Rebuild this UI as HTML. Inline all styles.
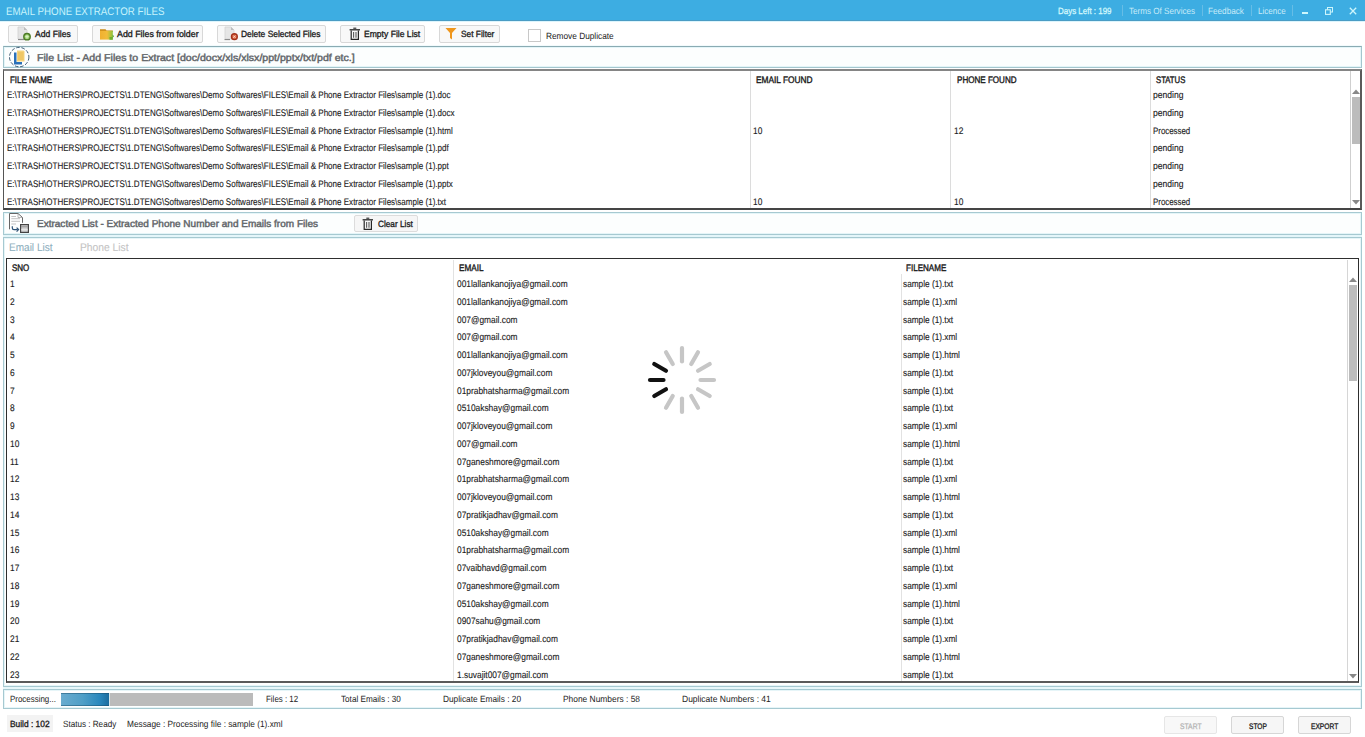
<!DOCTYPE html>
<html><head><meta charset="utf-8"><title>Email Phone Extractor Files</title>
<style>
html,body{margin:0;padding:0;width:1365px;height:737px;overflow:hidden;background:#ffffff;font-family:"Liberation Sans", sans-serif;}
.t{position:absolute;white-space:pre;line-height:1;transform-origin:0 0;text-rendering:geometricPrecision;}
</style></head><body>
<div style="position:absolute;left:0px;top:0px;width:1365px;height:20px;background:#3dade2"></div>
<div style="position:absolute;left:0px;top:20px;width:1365px;height:1px;background:#4a9cc4"></div>
<div style="position:absolute;left:0px;top:21px;width:1365px;height:1px;background:#dcf5fd"></div>
<div class="t" style="left:5.70px;top:7.00px;font-size:11px;color:#c8f4fc;transform:scaleX(0.8850);">EMAIL PHONE EXTRACTOR FILES</div>
<div class="t" style="left:1058.40px;top:7.00px;font-size:9px;color:#d4f8fd;-webkit-text-stroke:0.28px #d4f8fd;transform:scaleX(0.8839);">Days Left : 199</div>
<div style="position:absolute;left:1122px;top:5px;width:1px;height:11px;background:#66bde6"></div>
<div style="position:absolute;left:1202px;top:5px;width:1px;height:11px;background:#66bde6"></div>
<div style="position:absolute;left:1251px;top:5px;width:1px;height:11px;background:#66bde6"></div>
<div style="position:absolute;left:1292px;top:5px;width:1px;height:11px;background:#66bde6"></div>
<div class="t" style="left:1129.00px;top:7.00px;font-size:9px;color:#c9ebf8;transform:scaleX(0.8979);">Terms Of Services</div>
<div class="t" style="left:1208.30px;top:7.00px;font-size:9px;color:#c9ebf8;transform:scaleX(0.9084);">Feedback</div>
<div class="t" style="left:1257.70px;top:7.00px;font-size:9px;color:#c9ebf8;transform:scaleX(0.8930);">Licence</div>
<div style="position:absolute;left:1302px;top:12px;width:6px;height:2px;background:#cdf6fc"></div>
<svg style="position:absolute;left:1325px;top:6.5px" width="9" height="8" viewBox="0 0 9 8"><rect x="2.5" y="0.5" width="5" height="4.5" fill="none" stroke="#cdf6fc" stroke-width="1"/><rect x="0.5" y="2.8" width="4.8" height="4.6" fill="#3dade2" stroke="#cdf6fc" stroke-width="1.1"/></svg>
<svg style="position:absolute;left:1349px;top:7px" width="8" height="8" viewBox="0 0 8 8"><path d="M0.8 0.8 L7.2 7.2 M7.2 0.8 L0.8 7.2" stroke="#cdf6fc" stroke-width="1.3"/></svg>
<div style="position:absolute;left:8px;top:25px;width:70px;height:18px;box-sizing:border-box;border:1px solid #d8d8d8;border-radius:2px;background:#f8f8f8"></div>
<div style="position:absolute;left:92px;top:25px;width:111px;height:18px;box-sizing:border-box;border:1px solid #d8d8d8;border-radius:2px;background:#f8f8f8"></div>
<div style="position:absolute;left:217px;top:25px;width:109px;height:18px;box-sizing:border-box;border:1px solid #d8d8d8;border-radius:2px;background:#f8f8f8"></div>
<div style="position:absolute;left:340px;top:25px;width:85px;height:18px;box-sizing:border-box;border:1px solid #d8d8d8;border-radius:2px;background:#f8f8f8"></div>
<div style="position:absolute;left:439px;top:25px;width:61px;height:18px;box-sizing:border-box;border:1px solid #d8d8d8;border-radius:2px;background:#f8f8f8"></div>
<svg style="position:absolute;left:17px;top:26px" width="16" height="16" viewBox="0 0 16 16"><path d="M1 1 H7 L10 4 V13 H1 Z" fill="#e4e4e4" stroke="#cfcfcf" stroke-width="0.8"/><path d="M7 1 V4 H10" fill="#bdbdbd"/><path d="M1 13.6 H7" stroke="#777" stroke-width="0.9"/><circle cx="10" cy="10.7" r="3.9" fill="#4c7a26"/><circle cx="10" cy="10.7" r="2.5" fill="#9bcf6c"/><path d="M10 8.9 V12.5 M8.2 10.7 H11.8" stroke="#e0f5cc" stroke-width="1.1"/></svg>
<div class="t" style="left:34.60px;top:30.00px;font-size:9px;color:#1b1b1b;-webkit-text-stroke:0.32px #1b1b1b;transform:scaleX(0.9543);">Add Files</div>
<svg style="position:absolute;left:99px;top:28px" width="16" height="13" viewBox="0 0 16 13"><defs><linearGradient id="fg" x1="0" y1="0" x2="1" y2="0"><stop offset="0" stop-color="#f0b030"/><stop offset="0.55" stop-color="#f2bc3a"/><stop offset="1" stop-color="#8cc43a"/></linearGradient></defs><path d="M1 1.2 H6.5 L7.5 2.4 H13.8 V4 H1 Z" fill="#c98a18"/><path d="M1 2.8 H13.8 V11.6 H1 Z" fill="url(#fg)"/><path d="M13.6 6.6 L15 8.2 L13.6 9.8 Z" fill="#4a9a22"/><path d="M10.5 9 H13.8 V11.8 H10.5 Z" fill="#62ad2a" opacity="0.8"/></svg>
<div class="t" style="left:116.60px;top:30.00px;font-size:9px;color:#1b1b1b;-webkit-text-stroke:0.32px #1b1b1b;transform:scaleX(0.9828);">Add Files from folder</div>
<svg style="position:absolute;left:224px;top:26px" width="16" height="16" viewBox="0 0 16 16"><path d="M1 1 H7 L10 4 V13 H1 Z" fill="#e6e6e6" stroke="#d2d2d2" stroke-width="0.8"/><path d="M7 1 V4 H10" fill="#bdbdbd"/><path d="M0.5 13.6 H6" stroke="#777" stroke-width="0.9"/><circle cx="10.4" cy="10.7" r="3.6" fill="#a3301a"/><circle cx="10.4" cy="10.7" r="2.2" fill="#dd6a48"/><path d="M9.3 9.6 L11.5 11.8 M11.5 9.6 L9.3 11.8" stroke="#ffd8c8" stroke-width="1"/></svg>
<div class="t" style="left:241.30px;top:30.00px;font-size:9px;color:#1b1b1b;-webkit-text-stroke:0.32px #1b1b1b;transform:scaleX(0.9337);">Delete Selected Files</div>
<svg style="position:absolute;left:348.5px;top:27px" width="12.0" height="13.0" viewBox="0 0 12 13"><path d="M4.3 1.2 H7.3" stroke="#262626" stroke-width="1.1"/><path d="M0.6 2.8 H11" stroke="#262626" stroke-width="1.3"/><path d="M2.2 3.4 V12.3 H9.4 V3.4" fill="none" stroke="#262626" stroke-width="1.2"/><path d="M4.6 5 V10.8 M7 5 V10.8" stroke="#5a5a5a" stroke-width="1.1"/></svg>
<div class="t" style="left:363.70px;top:30.00px;font-size:9px;color:#1b1b1b;-webkit-text-stroke:0.32px #1b1b1b;transform:scaleX(0.9524);">Empty File List</div>
<svg style="position:absolute;left:445px;top:27px" width="12" height="13" viewBox="0 0 12 13"><path d="M0.5 1 H11.5 L7 6 V12.5 L5 11 V6 Z" fill="#ef961c"/></svg>
<div class="t" style="left:460.50px;top:30.00px;font-size:9px;color:#1b1b1b;-webkit-text-stroke:0.32px #1b1b1b;transform:scaleX(0.9276);">Set Filter</div>
<div style="position:absolute;left:528px;top:29px;width:13px;height:13px;box-sizing:border-box;border:1px solid #c8c8c8;background:#fff"></div>
<div class="t" style="left:545.50px;top:32.00px;font-size:9px;color:#222;transform:scaleX(0.9207);">Remove Duplicate</div>
<div style="position:absolute;left:3px;top:45px;width:1359px;height:1px;background:#f2fafc"></div>
<div style="position:absolute;left:3px;top:46px;width:1359px;height:22px;box-sizing:border-box;border:1px solid #a4c6ce;border-top-color:#8aabb3;background:#fcfefe;box-shadow:inset 0 0 0 1px #e4f5f8"></div>
<svg style="position:absolute;left:7px;top:46px" width="23" height="22" viewBox="0 0 23 22"><circle cx="12.2" cy="11.1" r="9.7" fill="none" stroke="#2e4c66" stroke-width="0.9" stroke-dasharray="3.6 1.7"/><path d="M7 6.5 H9.5 V16 H15 V18.5 H7 Z" fill="#2b70b8"/><path d="M10 4.5 H16.5 L17.5 5.5 V15.5 H10 Z" fill="#f6d37c"/><path d="M11 7 H16.5 M11 9 H16.5 M11 11 H16.5 M11 13 H16.5" stroke="#e6b648" stroke-width="0.8"/></svg>
<div class="t" style="left:36.50px;top:54.00px;font-size:10px;color:#62666a;-webkit-text-stroke:0.45px #62666a;transform:scaleX(1.0586);">File List - Add Files to Extract [doc/docx/xls/xlsx/ppt/pptx/txt/pdf etc.]</div>
<div style="position:absolute;left:3px;top:69px;width:1359px;height:141px;box-sizing:border-box;border:2px solid #858585;border-left:1px solid #555;border-right-color:#5a5a5a;border-bottom-color:#454545;background:#fff"></div>
<div style="position:absolute;left:750px;top:71px;width:1px;height:137px;background:#dcdcdc"></div>
<div style="position:absolute;left:950px;top:71px;width:1px;height:137px;background:#dcdcdc"></div>
<div style="position:absolute;left:1150px;top:71px;width:1px;height:137px;background:#dcdcdc"></div>
<div style="position:absolute;left:1350px;top:71px;width:1px;height:137px;background:#cfcfcf"></div>
<svg style="position:absolute;left:1352px;top:89px" width="8" height="5" viewBox="0 0 8 5"><path d="M0 5 L4 0.5 L8 5 Z" fill="#888"/></svg>
<div style="position:absolute;left:1352px;top:97px;width:8px;height:47px;background:#bcbcbc"></div>
<svg style="position:absolute;left:1352px;top:200px" width="8" height="5" viewBox="0 0 8 5"><path d="M0 0 L4 4.5 L8 0 Z" fill="#888"/></svg>
<div class="t" style="left:9.50px;top:76.00px;font-size:9.5px;color:#1b1b1b;-webkit-text-stroke:0.4px #1b1b1b;transform:scaleX(0.8395);">FILE NAME</div>
<div class="t" style="left:755.50px;top:76.00px;font-size:9.5px;color:#1b1b1b;-webkit-text-stroke:0.4px #1b1b1b;transform:scaleX(0.8766);">EMAIL FOUND</div>
<div class="t" style="left:956.60px;top:76.00px;font-size:9.5px;color:#1b1b1b;-webkit-text-stroke:0.4px #1b1b1b;transform:scaleX(0.8490);">PHONE FOUND</div>
<div class="t" style="left:1155.80px;top:76.00px;font-size:9.5px;color:#1b1b1b;-webkit-text-stroke:0.4px #1b1b1b;transform:scaleX(0.8124);">STATUS</div>
<div class="t" style="left:6.60px;top:91.01px;font-size:9.5px;color:#1a1a1a;-webkit-text-stroke:0.12px #1a1a1a;transform:scaleX(0.8460);">E:\TRASH\OTHERS\PROJECTS\1.DTENG\Softwares\Demo Softwares\FILES\Email &amp; Phone Extractor Files\sample (1).doc</div>
<div class="t" style="left:1153.40px;top:91.01px;font-size:9.5px;color:#1a1a1a;-webkit-text-stroke:0.12px #1a1a1a;transform:scaleX(0.9000);">pending</div>
<div class="t" style="left:6.60px;top:108.76px;font-size:9.5px;color:#1a1a1a;-webkit-text-stroke:0.12px #1a1a1a;transform:scaleX(0.8460);">E:\TRASH\OTHERS\PROJECTS\1.DTENG\Softwares\Demo Softwares\FILES\Email &amp; Phone Extractor Files\sample (1).docx</div>
<div class="t" style="left:1153.40px;top:108.76px;font-size:9.5px;color:#1a1a1a;-webkit-text-stroke:0.12px #1a1a1a;transform:scaleX(0.9000);">pending</div>
<div class="t" style="left:6.60px;top:126.51px;font-size:9.5px;color:#1a1a1a;-webkit-text-stroke:0.12px #1a1a1a;transform:scaleX(0.8460);">E:\TRASH\OTHERS\PROJECTS\1.DTENG\Softwares\Demo Softwares\FILES\Email &amp; Phone Extractor Files\sample (1).html</div>
<div class="t" style="left:753.40px;top:126.51px;font-size:9.5px;color:#1a1a1a;-webkit-text-stroke:0.12px #1a1a1a;transform:scaleX(0.8800);">10</div>
<div class="t" style="left:953.90px;top:126.51px;font-size:9.5px;color:#1a1a1a;-webkit-text-stroke:0.12px #1a1a1a;transform:scaleX(0.8800);">12</div>
<div class="t" style="left:1153.40px;top:126.51px;font-size:9.5px;color:#1a1a1a;-webkit-text-stroke:0.12px #1a1a1a;transform:scaleX(0.8300);">Processed</div>
<div class="t" style="left:6.60px;top:144.26px;font-size:9.5px;color:#1a1a1a;-webkit-text-stroke:0.12px #1a1a1a;transform:scaleX(0.8460);">E:\TRASH\OTHERS\PROJECTS\1.DTENG\Softwares\Demo Softwares\FILES\Email &amp; Phone Extractor Files\sample (1).pdf</div>
<div class="t" style="left:1153.40px;top:144.26px;font-size:9.5px;color:#1a1a1a;-webkit-text-stroke:0.12px #1a1a1a;transform:scaleX(0.9000);">pending</div>
<div class="t" style="left:6.60px;top:162.01px;font-size:9.5px;color:#1a1a1a;-webkit-text-stroke:0.12px #1a1a1a;transform:scaleX(0.8460);">E:\TRASH\OTHERS\PROJECTS\1.DTENG\Softwares\Demo Softwares\FILES\Email &amp; Phone Extractor Files\sample (1).ppt</div>
<div class="t" style="left:1153.40px;top:162.01px;font-size:9.5px;color:#1a1a1a;-webkit-text-stroke:0.12px #1a1a1a;transform:scaleX(0.9000);">pending</div>
<div class="t" style="left:6.60px;top:179.76px;font-size:9.5px;color:#1a1a1a;-webkit-text-stroke:0.12px #1a1a1a;transform:scaleX(0.8460);">E:\TRASH\OTHERS\PROJECTS\1.DTENG\Softwares\Demo Softwares\FILES\Email &amp; Phone Extractor Files\sample (1).pptx</div>
<div class="t" style="left:1153.40px;top:179.76px;font-size:9.5px;color:#1a1a1a;-webkit-text-stroke:0.12px #1a1a1a;transform:scaleX(0.9000);">pending</div>
<div class="t" style="left:6.60px;top:197.51px;font-size:9.5px;color:#1a1a1a;-webkit-text-stroke:0.12px #1a1a1a;transform:scaleX(0.8460);">E:\TRASH\OTHERS\PROJECTS\1.DTENG\Softwares\Demo Softwares\FILES\Email &amp; Phone Extractor Files\sample (1).txt</div>
<div class="t" style="left:753.40px;top:197.51px;font-size:9.5px;color:#1a1a1a;-webkit-text-stroke:0.12px #1a1a1a;transform:scaleX(0.8800);">10</div>
<div class="t" style="left:953.90px;top:197.51px;font-size:9.5px;color:#1a1a1a;-webkit-text-stroke:0.12px #1a1a1a;transform:scaleX(0.8800);">10</div>
<div class="t" style="left:1153.40px;top:197.51px;font-size:9.5px;color:#1a1a1a;-webkit-text-stroke:0.12px #1a1a1a;transform:scaleX(0.8300);">Processed</div>
<div style="position:absolute;left:3px;top:212px;width:1359px;height:23px;box-sizing:border-box;border:1px solid #a6c9d1;background:#fcfefe;box-shadow:inset 0 0 0 1px #e4f5f8"></div>
<div style="position:absolute;left:3px;top:235px;width:1359px;height:2px;background:#e4f6fa"></div>
<svg style="position:absolute;left:9px;top:213px" width="21" height="20" viewBox="0 0 21 20"><path d="M0.5 16.3 V0.5 H9 L13.5 4.5 V9.8 H10.5 V12 H2.5 V16.3 Z" fill="#ffffff"/><path d="M0.5 16.3 V0.5 H9 L13.5 4.5 V9.8" fill="none" stroke="#555" stroke-width="0.9"/><path d="M9 0.5 V4.5 H13.5" fill="none" stroke="#999" stroke-width="0.7"/><path d="M2.3 3.5 H7 M2.3 5.7 H11 M2.3 8.3 H11 M2.3 11 H7" stroke="#b4b4b4" stroke-width="0.8"/><path d="M3.3 13.2 V15 Q3.3 16.6 5 16.6 H8.8" fill="none" stroke="#2d5276" stroke-width="1.2"/><path d="M7.6 14.6 L9.6 16.6 L7.6 18.6" fill="none" stroke="#2d5276" stroke-width="1.2"/><rect x="11.6" y="11.6" width="7.8" height="7.8" fill="#d0d0d0" stroke="#444" stroke-width="1.2"/><path d="M12.2 13.8 H18.8" stroke="#8a8a8a" stroke-width="0.9"/><path d="M12.2 16.8 H18.8" stroke="#f0f0f0" stroke-width="0.9"/></svg>
<div class="t" style="left:36.60px;top:220.00px;font-size:10px;color:#62666a;-webkit-text-stroke:0.45px #62666a;transform:scaleX(1.0013);">Extracted List - Extracted Phone Number and Emails from Files</div>
<div style="position:absolute;left:354px;top:215px;width:64px;height:17px;box-sizing:border-box;border:1px solid #dcdcdc;border-radius:2px;background:#f6f6f6"></div>
<svg style="position:absolute;left:362px;top:217px" width="12.0" height="13.0" viewBox="0 0 12 13"><path d="M4.3 1.2 H7.3" stroke="#262626" stroke-width="1.1"/><path d="M0.6 2.8 H11" stroke="#262626" stroke-width="1.3"/><path d="M2.2 3.4 V12.3 H9.4 V3.4" fill="none" stroke="#262626" stroke-width="1.2"/><path d="M4.6 5 V10.8 M7 5 V10.8" stroke="#5a5a5a" stroke-width="1.1"/></svg>
<div class="t" style="left:378.20px;top:220.00px;font-size:9px;color:#1b1b1b;-webkit-text-stroke:0.32px #1b1b1b;transform:scaleX(0.9155);">Clear List</div>
<div style="position:absolute;left:3px;top:237px;width:1359px;height:450px;box-sizing:border-box;border:1px solid #a6c9d1;background:#fff;box-shadow:inset 0 0 0 1px #e6f5f8"></div>
<div style="position:absolute;left:3px;top:687px;width:1359px;height:2px;background:#e8f7fa"></div>
<div class="t" style="left:8.70px;top:243.00px;font-size:11px;color:#8fb0be;-webkit-text-stroke:0.1px #8fb0be;transform:scaleX(0.9124);">Email List</div>
<div class="t" style="left:79.60px;top:243.00px;font-size:11px;color:#c4c4c4;-webkit-text-stroke:0.1px #c4c4c4;transform:scaleX(0.9350);">Phone List</div>
<div style="position:absolute;left:6px;top:258px;width:1353px;height:425px;box-sizing:border-box;border:1px solid #2e2e2e;border-bottom:2px solid #5a5a5a;background:#fff"></div>
<div style="position:absolute;left:453px;top:260px;width:1px;height:421px;background:#e2e2e2"></div>
<div style="position:absolute;left:901px;top:274px;width:1px;height:407px;background:#e2e2e2"></div>
<div style="position:absolute;left:1347px;top:260px;width:1px;height:421px;background:#d6d6d6"></div>
<svg style="position:absolute;left:1349px;top:277px" width="8" height="5" viewBox="0 0 8 5"><path d="M0 5 L4 0.5 L8 5 Z" fill="#888"/></svg>
<div style="position:absolute;left:1349px;top:285px;width:8px;height:96px;background:#bcbcbc"></div>
<svg style="position:absolute;left:1349px;top:673.5px" width="8" height="5" viewBox="0 0 8 5"><path d="M0 0 L4 4.5 L8 0 Z" fill="#888"/></svg>
<div class="t" style="left:12.20px;top:264.00px;font-size:9.5px;color:#1b1b1b;-webkit-text-stroke:0.4px #1b1b1b;transform:scaleX(0.8403);">SNO</div>
<div class="t" style="left:459.40px;top:264.00px;font-size:9.5px;color:#1b1b1b;-webkit-text-stroke:0.4px #1b1b1b;transform:scaleX(0.8594);">EMAIL</div>
<div class="t" style="left:905.70px;top:264.00px;font-size:9.5px;color:#1b1b1b;-webkit-text-stroke:0.4px #1b1b1b;transform:scaleX(0.8483);">FILENAME</div>
<div class="t" style="left:9.50px;top:280.01px;font-size:9.5px;color:#1a1a1a;-webkit-text-stroke:0.12px #1a1a1a;transform:scaleX(0.8800);">1</div>
<div class="t" style="left:456.60px;top:280.01px;font-size:9.5px;color:#1a1a1a;-webkit-text-stroke:0.12px #1a1a1a;transform:scaleX(0.8800);">001lallankanojiya@gmail.com</div>
<div class="t" style="left:902.90px;top:280.01px;font-size:9.5px;color:#1a1a1a;-webkit-text-stroke:0.12px #1a1a1a;transform:scaleX(0.8700);">sample (1).txt</div>
<div class="t" style="left:9.50px;top:297.76px;font-size:9.5px;color:#1a1a1a;-webkit-text-stroke:0.12px #1a1a1a;transform:scaleX(0.8800);">2</div>
<div class="t" style="left:456.60px;top:297.76px;font-size:9.5px;color:#1a1a1a;-webkit-text-stroke:0.12px #1a1a1a;transform:scaleX(0.8800);">001lallankanojiya@gmail.com</div>
<div class="t" style="left:902.90px;top:297.76px;font-size:9.5px;color:#1a1a1a;-webkit-text-stroke:0.12px #1a1a1a;transform:scaleX(0.8700);">sample (1).xml</div>
<div class="t" style="left:9.50px;top:315.51px;font-size:9.5px;color:#1a1a1a;-webkit-text-stroke:0.12px #1a1a1a;transform:scaleX(0.8800);">3</div>
<div class="t" style="left:456.60px;top:315.51px;font-size:9.5px;color:#1a1a1a;-webkit-text-stroke:0.12px #1a1a1a;transform:scaleX(0.8800);">007@gmail.com</div>
<div class="t" style="left:902.90px;top:315.51px;font-size:9.5px;color:#1a1a1a;-webkit-text-stroke:0.12px #1a1a1a;transform:scaleX(0.8700);">sample (1).txt</div>
<div class="t" style="left:9.50px;top:333.26px;font-size:9.5px;color:#1a1a1a;-webkit-text-stroke:0.12px #1a1a1a;transform:scaleX(0.8800);">4</div>
<div class="t" style="left:456.60px;top:333.26px;font-size:9.5px;color:#1a1a1a;-webkit-text-stroke:0.12px #1a1a1a;transform:scaleX(0.8800);">007@gmail.com</div>
<div class="t" style="left:902.90px;top:333.26px;font-size:9.5px;color:#1a1a1a;-webkit-text-stroke:0.12px #1a1a1a;transform:scaleX(0.8700);">sample (1).xml</div>
<div class="t" style="left:9.50px;top:351.01px;font-size:9.5px;color:#1a1a1a;-webkit-text-stroke:0.12px #1a1a1a;transform:scaleX(0.8800);">5</div>
<div class="t" style="left:456.60px;top:351.01px;font-size:9.5px;color:#1a1a1a;-webkit-text-stroke:0.12px #1a1a1a;transform:scaleX(0.8800);">001lallankanojiya@gmail.com</div>
<div class="t" style="left:902.90px;top:351.01px;font-size:9.5px;color:#1a1a1a;-webkit-text-stroke:0.12px #1a1a1a;transform:scaleX(0.8700);">sample (1).html</div>
<div class="t" style="left:9.50px;top:368.76px;font-size:9.5px;color:#1a1a1a;-webkit-text-stroke:0.12px #1a1a1a;transform:scaleX(0.8800);">6</div>
<div class="t" style="left:456.60px;top:368.76px;font-size:9.5px;color:#1a1a1a;-webkit-text-stroke:0.12px #1a1a1a;transform:scaleX(0.8800);">007jkloveyou@gmail.com</div>
<div class="t" style="left:902.90px;top:368.76px;font-size:9.5px;color:#1a1a1a;-webkit-text-stroke:0.12px #1a1a1a;transform:scaleX(0.8700);">sample (1).txt</div>
<div class="t" style="left:9.50px;top:386.51px;font-size:9.5px;color:#1a1a1a;-webkit-text-stroke:0.12px #1a1a1a;transform:scaleX(0.8800);">7</div>
<div class="t" style="left:456.60px;top:386.51px;font-size:9.5px;color:#1a1a1a;-webkit-text-stroke:0.12px #1a1a1a;transform:scaleX(0.8800);">01prabhatsharma@gmail.com</div>
<div class="t" style="left:902.90px;top:386.51px;font-size:9.5px;color:#1a1a1a;-webkit-text-stroke:0.12px #1a1a1a;transform:scaleX(0.8700);">sample (1).txt</div>
<div class="t" style="left:9.50px;top:404.26px;font-size:9.5px;color:#1a1a1a;-webkit-text-stroke:0.12px #1a1a1a;transform:scaleX(0.8800);">8</div>
<div class="t" style="left:456.60px;top:404.26px;font-size:9.5px;color:#1a1a1a;-webkit-text-stroke:0.12px #1a1a1a;transform:scaleX(0.8800);">0510akshay@gmail.com</div>
<div class="t" style="left:902.90px;top:404.26px;font-size:9.5px;color:#1a1a1a;-webkit-text-stroke:0.12px #1a1a1a;transform:scaleX(0.8700);">sample (1).txt</div>
<div class="t" style="left:9.50px;top:422.01px;font-size:9.5px;color:#1a1a1a;-webkit-text-stroke:0.12px #1a1a1a;transform:scaleX(0.8800);">9</div>
<div class="t" style="left:456.60px;top:422.01px;font-size:9.5px;color:#1a1a1a;-webkit-text-stroke:0.12px #1a1a1a;transform:scaleX(0.8800);">007jkloveyou@gmail.com</div>
<div class="t" style="left:902.90px;top:422.01px;font-size:9.5px;color:#1a1a1a;-webkit-text-stroke:0.12px #1a1a1a;transform:scaleX(0.8700);">sample (1).xml</div>
<div class="t" style="left:9.50px;top:439.76px;font-size:9.5px;color:#1a1a1a;-webkit-text-stroke:0.12px #1a1a1a;transform:scaleX(0.8800);">10</div>
<div class="t" style="left:456.60px;top:439.76px;font-size:9.5px;color:#1a1a1a;-webkit-text-stroke:0.12px #1a1a1a;transform:scaleX(0.8800);">007@gmail.com</div>
<div class="t" style="left:902.90px;top:439.76px;font-size:9.5px;color:#1a1a1a;-webkit-text-stroke:0.12px #1a1a1a;transform:scaleX(0.8700);">sample (1).html</div>
<div class="t" style="left:9.50px;top:457.51px;font-size:9.5px;color:#1a1a1a;-webkit-text-stroke:0.12px #1a1a1a;transform:scaleX(0.8800);">11</div>
<div class="t" style="left:456.60px;top:457.51px;font-size:9.5px;color:#1a1a1a;-webkit-text-stroke:0.12px #1a1a1a;transform:scaleX(0.8800);">07ganeshmore@gmail.com</div>
<div class="t" style="left:902.90px;top:457.51px;font-size:9.5px;color:#1a1a1a;-webkit-text-stroke:0.12px #1a1a1a;transform:scaleX(0.8700);">sample (1).txt</div>
<div class="t" style="left:9.50px;top:475.26px;font-size:9.5px;color:#1a1a1a;-webkit-text-stroke:0.12px #1a1a1a;transform:scaleX(0.8800);">12</div>
<div class="t" style="left:456.60px;top:475.26px;font-size:9.5px;color:#1a1a1a;-webkit-text-stroke:0.12px #1a1a1a;transform:scaleX(0.8800);">01prabhatsharma@gmail.com</div>
<div class="t" style="left:902.90px;top:475.26px;font-size:9.5px;color:#1a1a1a;-webkit-text-stroke:0.12px #1a1a1a;transform:scaleX(0.8700);">sample (1).xml</div>
<div class="t" style="left:9.50px;top:493.01px;font-size:9.5px;color:#1a1a1a;-webkit-text-stroke:0.12px #1a1a1a;transform:scaleX(0.8800);">13</div>
<div class="t" style="left:456.60px;top:493.01px;font-size:9.5px;color:#1a1a1a;-webkit-text-stroke:0.12px #1a1a1a;transform:scaleX(0.8800);">007jkloveyou@gmail.com</div>
<div class="t" style="left:902.90px;top:493.01px;font-size:9.5px;color:#1a1a1a;-webkit-text-stroke:0.12px #1a1a1a;transform:scaleX(0.8700);">sample (1).html</div>
<div class="t" style="left:9.50px;top:510.76px;font-size:9.5px;color:#1a1a1a;-webkit-text-stroke:0.12px #1a1a1a;transform:scaleX(0.8800);">14</div>
<div class="t" style="left:456.60px;top:510.76px;font-size:9.5px;color:#1a1a1a;-webkit-text-stroke:0.12px #1a1a1a;transform:scaleX(0.8800);">07pratikjadhav@gmail.com</div>
<div class="t" style="left:902.90px;top:510.76px;font-size:9.5px;color:#1a1a1a;-webkit-text-stroke:0.12px #1a1a1a;transform:scaleX(0.8700);">sample (1).txt</div>
<div class="t" style="left:9.50px;top:528.51px;font-size:9.5px;color:#1a1a1a;-webkit-text-stroke:0.12px #1a1a1a;transform:scaleX(0.8800);">15</div>
<div class="t" style="left:456.60px;top:528.51px;font-size:9.5px;color:#1a1a1a;-webkit-text-stroke:0.12px #1a1a1a;transform:scaleX(0.8800);">0510akshay@gmail.com</div>
<div class="t" style="left:902.90px;top:528.51px;font-size:9.5px;color:#1a1a1a;-webkit-text-stroke:0.12px #1a1a1a;transform:scaleX(0.8700);">sample (1).xml</div>
<div class="t" style="left:9.50px;top:546.26px;font-size:9.5px;color:#1a1a1a;-webkit-text-stroke:0.12px #1a1a1a;transform:scaleX(0.8800);">16</div>
<div class="t" style="left:456.60px;top:546.26px;font-size:9.5px;color:#1a1a1a;-webkit-text-stroke:0.12px #1a1a1a;transform:scaleX(0.8800);">01prabhatsharma@gmail.com</div>
<div class="t" style="left:902.90px;top:546.26px;font-size:9.5px;color:#1a1a1a;-webkit-text-stroke:0.12px #1a1a1a;transform:scaleX(0.8700);">sample (1).html</div>
<div class="t" style="left:9.50px;top:564.01px;font-size:9.5px;color:#1a1a1a;-webkit-text-stroke:0.12px #1a1a1a;transform:scaleX(0.8800);">17</div>
<div class="t" style="left:456.60px;top:564.01px;font-size:9.5px;color:#1a1a1a;-webkit-text-stroke:0.12px #1a1a1a;transform:scaleX(0.8800);">07vaibhavd@gmail.com</div>
<div class="t" style="left:902.90px;top:564.01px;font-size:9.5px;color:#1a1a1a;-webkit-text-stroke:0.12px #1a1a1a;transform:scaleX(0.8700);">sample (1).txt</div>
<div class="t" style="left:9.50px;top:581.76px;font-size:9.5px;color:#1a1a1a;-webkit-text-stroke:0.12px #1a1a1a;transform:scaleX(0.8800);">18</div>
<div class="t" style="left:456.60px;top:581.76px;font-size:9.5px;color:#1a1a1a;-webkit-text-stroke:0.12px #1a1a1a;transform:scaleX(0.8800);">07ganeshmore@gmail.com</div>
<div class="t" style="left:902.90px;top:581.76px;font-size:9.5px;color:#1a1a1a;-webkit-text-stroke:0.12px #1a1a1a;transform:scaleX(0.8700);">sample (1).xml</div>
<div class="t" style="left:9.50px;top:599.51px;font-size:9.5px;color:#1a1a1a;-webkit-text-stroke:0.12px #1a1a1a;transform:scaleX(0.8800);">19</div>
<div class="t" style="left:456.60px;top:599.51px;font-size:9.5px;color:#1a1a1a;-webkit-text-stroke:0.12px #1a1a1a;transform:scaleX(0.8800);">0510akshay@gmail.com</div>
<div class="t" style="left:902.90px;top:599.51px;font-size:9.5px;color:#1a1a1a;-webkit-text-stroke:0.12px #1a1a1a;transform:scaleX(0.8700);">sample (1).html</div>
<div class="t" style="left:9.50px;top:617.26px;font-size:9.5px;color:#1a1a1a;-webkit-text-stroke:0.12px #1a1a1a;transform:scaleX(0.8800);">20</div>
<div class="t" style="left:456.60px;top:617.26px;font-size:9.5px;color:#1a1a1a;-webkit-text-stroke:0.12px #1a1a1a;transform:scaleX(0.8800);">0907sahu@gmail.com</div>
<div class="t" style="left:902.90px;top:617.26px;font-size:9.5px;color:#1a1a1a;-webkit-text-stroke:0.12px #1a1a1a;transform:scaleX(0.8700);">sample (1).txt</div>
<div class="t" style="left:9.50px;top:635.01px;font-size:9.5px;color:#1a1a1a;-webkit-text-stroke:0.12px #1a1a1a;transform:scaleX(0.8800);">21</div>
<div class="t" style="left:456.60px;top:635.01px;font-size:9.5px;color:#1a1a1a;-webkit-text-stroke:0.12px #1a1a1a;transform:scaleX(0.8800);">07pratikjadhav@gmail.com</div>
<div class="t" style="left:902.90px;top:635.01px;font-size:9.5px;color:#1a1a1a;-webkit-text-stroke:0.12px #1a1a1a;transform:scaleX(0.8700);">sample (1).xml</div>
<div class="t" style="left:9.50px;top:652.76px;font-size:9.5px;color:#1a1a1a;-webkit-text-stroke:0.12px #1a1a1a;transform:scaleX(0.8800);">22</div>
<div class="t" style="left:456.60px;top:652.76px;font-size:9.5px;color:#1a1a1a;-webkit-text-stroke:0.12px #1a1a1a;transform:scaleX(0.8800);">07ganeshmore@gmail.com</div>
<div class="t" style="left:902.90px;top:652.76px;font-size:9.5px;color:#1a1a1a;-webkit-text-stroke:0.12px #1a1a1a;transform:scaleX(0.8700);">sample (1).html</div>
<div class="t" style="left:9.50px;top:670.51px;font-size:9.5px;color:#1a1a1a;-webkit-text-stroke:0.12px #1a1a1a;transform:scaleX(0.8800);">23</div>
<div class="t" style="left:456.60px;top:670.51px;font-size:9.5px;color:#1a1a1a;-webkit-text-stroke:0.12px #1a1a1a;transform:scaleX(0.8800);">1.suvajit007@gmail.com</div>
<div class="t" style="left:902.90px;top:670.51px;font-size:9.5px;color:#1a1a1a;-webkit-text-stroke:0.12px #1a1a1a;transform:scaleX(0.8700);">sample (1).txt</div>
<svg style="position:absolute;left:645.5px;top:344px" width="72" height="72" viewBox="-36 -36 72 72"><line x1="18.50" y1="0.00" x2="32.00" y2="0.00" stroke="#c6c6c6" stroke-width="4.2" stroke-linecap="round"/><line x1="16.02" y1="9.25" x2="27.71" y2="16.00" stroke="#c6c6c6" stroke-width="4.2" stroke-linecap="round"/><line x1="9.25" y1="16.02" x2="16.00" y2="27.71" stroke="#c6c6c6" stroke-width="4.2" stroke-linecap="round"/><line x1="0.00" y1="18.50" x2="0.00" y2="32.00" stroke="#c6c6c6" stroke-width="4.2" stroke-linecap="round"/><line x1="-9.25" y1="16.02" x2="-16.00" y2="27.71" stroke="#c6c6c6" stroke-width="4.2" stroke-linecap="round"/><line x1="-16.02" y1="9.25" x2="-27.71" y2="16.00" stroke="#111111" stroke-width="4.2" stroke-linecap="round"/><line x1="-18.50" y1="0.00" x2="-32.00" y2="0.00" stroke="#111111" stroke-width="4.2" stroke-linecap="round"/><line x1="-16.02" y1="-9.25" x2="-27.71" y2="-16.00" stroke="#111111" stroke-width="4.2" stroke-linecap="round"/><line x1="-9.25" y1="-16.02" x2="-16.00" y2="-27.71" stroke="#c6c6c6" stroke-width="4.2" stroke-linecap="round"/><line x1="-0.00" y1="-18.50" x2="-0.00" y2="-32.00" stroke="#c6c6c6" stroke-width="4.2" stroke-linecap="round"/><line x1="9.25" y1="-16.02" x2="16.00" y2="-27.71" stroke="#c6c6c6" stroke-width="4.2" stroke-linecap="round"/><line x1="16.02" y1="-9.25" x2="27.71" y2="-16.00" stroke="#c6c6c6" stroke-width="4.2" stroke-linecap="round"/></svg>
<div style="position:absolute;left:3px;top:689px;width:1359px;height:20px;box-sizing:border-box;border:1px solid #a6c9d1;background:#fff;box-shadow:inset 0 0 0 1px #e6f5f8"></div>
<div class="t" style="left:10.00px;top:695.00px;font-size:9px;color:#222;transform:scaleX(0.8824);">Processing...</div>
<div style="position:absolute;left:61px;top:693px;width:192px;height:13px;background:#bbbbbb"></div>
<div style="position:absolute;left:61px;top:693px;width:48px;height:13px;background:linear-gradient(90deg,#6aaccf,#4f9fc7 45%,#2a88bd 80%,#1b6c9e);box-shadow:inset 0 1px 0 rgba(20,70,100,0.45),inset 0 -1px 0 rgba(20,70,100,0.45)"></div>
<div style="position:absolute;left:109px;top:693px;width:1px;height:13px;background:#d6e6ea"></div>
<div class="t" style="left:265.60px;top:695.00px;font-size:9px;color:#222;transform:scaleX(0.8819);">Files : 12</div>
<div class="t" style="left:340.70px;top:695.00px;font-size:9px;color:#222;transform:scaleX(0.9072);">Total Emails : 30</div>
<div class="t" style="left:442.60px;top:695.00px;font-size:9px;color:#222;transform:scaleX(0.9227);">Duplicate Emails : 20</div>
<div class="t" style="left:562.90px;top:695.00px;font-size:9px;color:#222;transform:scaleX(0.9329);">Phone Numbers : 58</div>
<div class="t" style="left:681.90px;top:695.00px;font-size:9px;color:#222;transform:scaleX(0.9443);">Duplicate Numbers : 41</div>
<div style="position:absolute;left:7px;top:715px;width:46px;height:17px;background:#f3f3f3"></div>
<div class="t" style="left:10.40px;top:720.00px;font-size:9px;color:#1b1b1b;-webkit-text-stroke:0.32px #1b1b1b;transform:scaleX(0.9312);">Build : 102</div>
<div class="t" style="left:63.20px;top:720.00px;font-size:9px;color:#222;transform:scaleX(0.9013);">Status : Ready</div>
<div class="t" style="left:127.10px;top:720.00px;font-size:9px;color:#222;transform:scaleX(0.9199);">Message : Processing file : sample (1).xml</div>
<div style="position:absolute;left:1164px;top:716px;width:53px;height:18px;box-sizing:border-box;border:1px solid #e6e6e6;border-radius:2px;background:#f8f8f8"></div>
<div style="position:absolute;left:1231px;top:716px;width:53px;height:18px;box-sizing:border-box;border:1px solid #d6d6d6;border-radius:2px;background:#f6f6f6"></div>
<div style="position:absolute;left:1298px;top:716px;width:53px;height:18px;box-sizing:border-box;border:1px solid #d6d6d6;border-radius:2px;background:#f6f6f6"></div>
<div class="t" style="left:1180.00px;top:723.00px;font-size:8px;color:#b2b2b2;-webkit-text-stroke:0.25px #b2b2b2;transform:scaleX(0.8437);">START</div>
<div class="t" style="left:1248.60px;top:723.00px;font-size:8px;color:#1b1b1b;-webkit-text-stroke:0.3px #1b1b1b;transform:scaleX(0.8227);">STOP</div>
<div class="t" style="left:1310.70px;top:723.00px;font-size:8px;color:#1b1b1b;-webkit-text-stroke:0.3px #1b1b1b;transform:scaleX(0.8305);">EXPORT</div>
</body></html>
